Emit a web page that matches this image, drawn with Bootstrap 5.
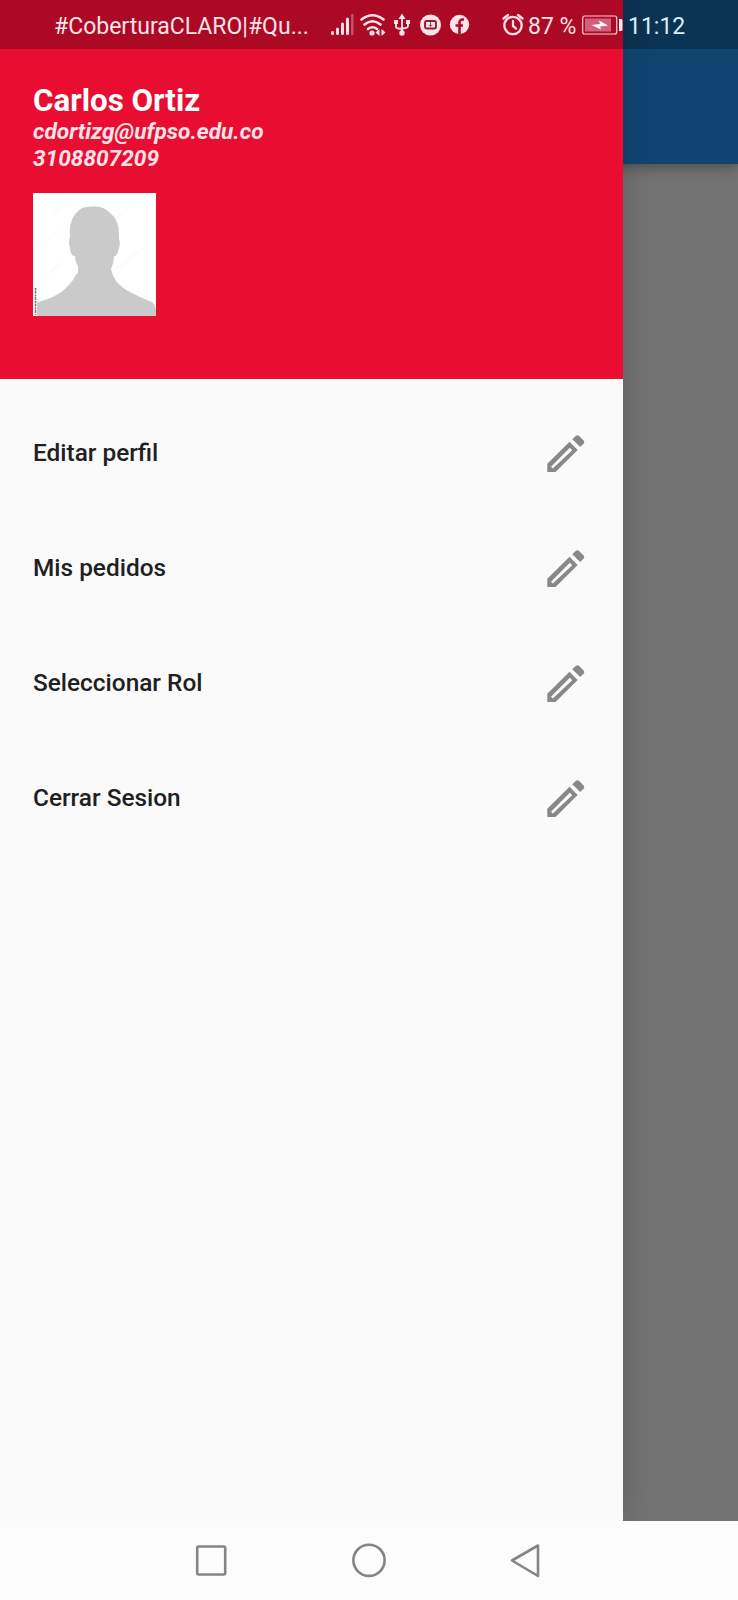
<!DOCTYPE html>
<html lang="es">
<head>
<meta charset="utf-8">
<meta name="viewport" content="width=device-width, initial-scale=1">
<title>Menú</title>
<link href="https://cdn.jsdelivr.net/npm/bootstrap@5.3.0/dist/css/bootstrap.min.css" rel="stylesheet">
<style>
body{font-family:Roboto,sans-serif;background:#737373;color:#202022}
.screen{width:738px;height:1600px}
.app-bar{height:164px;background:#104572;box-shadow:0 3px 13px rgba(0,0,0,.35)}
.drawer{width:623px;height:1521px;background:#fafafa;box-shadow:0 0 32px rgba(0,0,0,.17)}
.status{height:49px;background:rgba(0,0,0,.26);color:#ffe3ea;font-size:23px;line-height:47px;white-space:nowrap}
.status span{padding-top:3px}
.profile{height:379px;background:#e80d31;padding:85px 33px 0}
.profile h1{font-size:31.3px;line-height:32px;font-weight:700;margin:0;color:#fff}
.contact{font-size:22.65px;line-height:26.5px;font-weight:700;font-style:italic;color:#ffe3e8;padding-top:2px}
.avatar{width:123px;height:123px;margin-top:21px}
.menu{padding-top:16px}
.entry{height:115px;padding:0 31px 0 33px;font-size:24.4px;font-weight:500}
.entry span{padding-top:2px}
.system-nav{height:79px;background:#fcfcfc}
.carrier{width:251px;margin-left:54px}
.signals{margin-left:15px}
.alarm{margin-left:6px}
.percent{margin-left:3px;width:52px}
.clock{color:#dcecf8;margin-left:5px}
</style>
</head>
<body>
<div class="screen position-relative overflow-hidden d-flex flex-column">
  <header class="app-bar flex-shrink-0"></header>
  <main class="flex-grow-1"></main>
  <aside class="drawer position-absolute top-0 start-0">
    <section class="profile">
      <h1>Carlos Ortiz</h1>
      <div class="contact">cdortizg@ufpso.edu.co<br>3108807209</div>
      <svg class="avatar d-block" viewBox="0 0 123 123">
        <path fill="#fff" d="M0 0h123v123H0z"/>
        <path d="M5 55l20-17M80 28l20-18M5 90l22-20M85 75l25-20M20 20L38 5" stroke="#fcfcfc" stroke-width="3"/>
        <path fill="#cacaca" d="M0 110Q24 105 34 94Q40 88 43 82L45 80V73Q42 69 42 63Q38 64 37 55Q35 48 37 44Q35 24 49 15Q55 13 61 13.500Q71 13 77 20Q87 27 86 46Q88 51 85 58Q84 64 81 63Q81 70 78 76Q79 82 83 88Q89 96 105 103Q114 107 119 109Q122 112 123 116V123H0Z"/>
        <path fill="#fff" d="M0 94h4v29H0z"/><path d="M2.500 95v27" stroke="#777" stroke-width="1.500" stroke-dasharray="2 .5 3 1"/>
      </svg>
    </section>
    <nav class="menu d-flex flex-column">
      <div class="entry d-flex align-items-center justify-content-between"><span>Editar perfil</span><svg width="54" height="54" viewBox="8 6 54 54" fill="#888"><use href="#pencil"/></svg></div>
      <div class="entry d-flex align-items-center justify-content-between"><span>Mis pedidos</span><svg width="54" height="54" viewBox="8 6 54 54" fill="#888"><use href="#pencil"/></svg></div>
      <div class="entry d-flex align-items-center justify-content-between"><span>Seleccionar Rol</span><svg width="54" height="54" viewBox="8 6 54 54" fill="#888"><use href="#pencil"/></svg></div>
      <div class="entry d-flex align-items-center justify-content-between"><span>Cerrar Sesion</span><svg width="54" height="54" viewBox="8 6 54 54" fill="#888"><use href="#pencil"/></svg></div>
    </nav>
  </aside>
  <div class="status position-absolute top-0 start-0 w-100 d-flex align-items-center">
    <span class="carrier">#CoberturaCLARO|#Qu...</span>
    <svg class="signals" width="175" height="49" viewBox="320 0 175 49" fill="none" stroke="#ffe3ea" stroke-linecap="round">
      <path d="M332.500 32.500v1M337.500 29v4.500M342.500 24v9.500M347.500 19v14.500" stroke-width="3"/><path d="M352.300 15v19" stroke="#c9506a" stroke-width="2.500"/>
      <path d="M361.500 19.500Q372.500 11 383.500 19.500M364.500 24.500Q372.500 18 380.500 24.500M368 29Q372.500 25.500 377 29" stroke-width="2.600"/>
      <circle cx="372" cy="33" r="2.600" fill="#ffe3ea" stroke="none"/><path fill="#ffe3ea" stroke="none" d="M379.500 29v7l-4-3.500zM381.500 29v7l4-3.500z"/>
      <path d="M402 17v16M396 23v4q0 1 2 1.500l4 .5M408 23v3q0 1.500-2 2l-4 .5" stroke-width="1.800"/><g fill="#ffe3ea" stroke="none"><path d="M398.500 19l3.500-5.500 3.500 5.500zM394 20h4v4h-4zM406 20h4v4h-4z"/><circle cx="402" cy="33" r="2.700"/></g>
      <circle cx="430.500" cy="25" r="10.500" fill="#ffe3ea" stroke="none"/><rect x="425" y="21" width="11" height="7.500" rx="1.500" stroke="#9c1731" stroke-width="1.900"/><path d="M430.500 22v4M429.300 25l1.200 1.300 1.200-1.300" stroke="#9c1731" stroke-width=".9"/>
      <circle cx="459.500" cy="24.500" r="9.700" fill="#ffe3ea" stroke="none"/><path d="M459.500 34V22.500q0-3.500 4.500-3M455.500 25.500h7.500" stroke="#ac0a25" stroke-width="2.600" stroke-linecap="butt"/>
    </svg>
    <svg class="alarm" width="24" height="49" viewBox="501 0 24 49" fill="none" stroke="#ffe3ea" stroke-width="2.300" stroke-linecap="round"><circle cx="513" cy="25.500" r="8.700"/><path d="M513 21v5l3 2.500M503.500 18.500l4.500-3.500M522.500 18.500L518 15"/></svg>
    <span class="percent">87 %</span>
    <svg width="43" height="49" viewBox="580 0 43 49"><rect x="582.700" y="16" width="34" height="18" rx="2" fill="none" stroke="#ffd0da" stroke-width="1.200"/><path fill="#d3607a" d="M585 18.500h26v13h-26z"/><path fill="#fff" d="M591.500 25l8.500-1-1-3.500 9 5-8 1 1 3z"/><path fill="#ffe3ea" d="M619 19h2q1.500 0 1.500 1.500v9q0 1.500-1.500 1.500h-2z"/></svg>
    <span class="clock">11:12</span>
  </div>
  <footer class="system-nav position-relative flex-shrink-0">
    <svg class="d-block" width="738" height="79" viewBox="0 1521 738 79" fill="none" stroke="#858585" stroke-width="2.600" stroke-linejoin="round"><rect x="197.200" y="1546.500" width="28" height="28" rx="1.500"/><circle cx="369" cy="1560.300" r="15.600"/><path d="M512 1560.500l26-15v30.500z"/></svg>
  </footer>
</div>
<svg width="0" height="0" class="position-absolute"><defs><g id="pencil"><path fill-rule="evenodd" d="M17.300 52V43.700L39.500 21.800 47.700 30 25.500 52ZM21 46.700l1.800 1.800L42.200 30.200 39.800 27.800Z"/><path d="M42.300 19.300l3.400-3.300q1.700-1.500 3.400 0l4.500 4.500q1.600 1.700 0 3.300L50.200 27z"/></g></defs></svg>
<script src="https://cdn.jsdelivr.net/npm/bootstrap@5.3.0/dist/js/bootstrap.bundle.min.js"></script>
</body>
</html>
